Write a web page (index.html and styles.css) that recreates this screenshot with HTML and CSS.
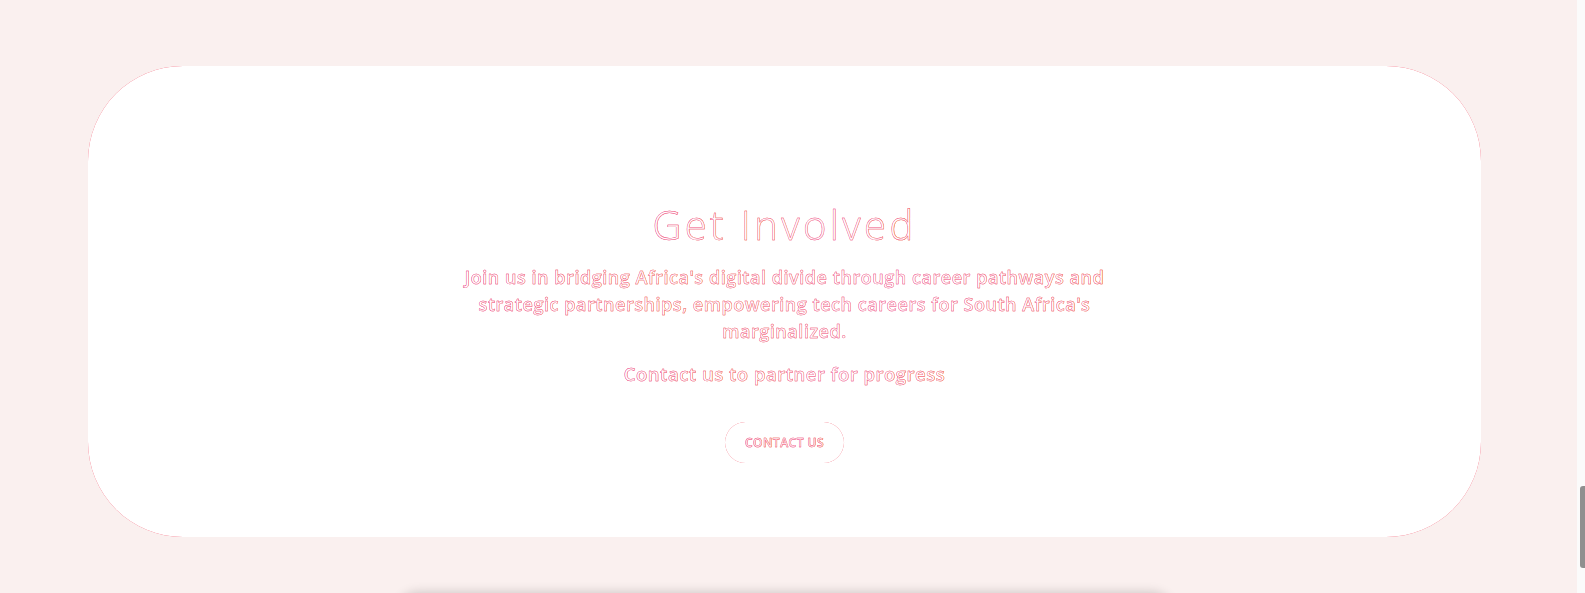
FILE: index.html
```html
<!DOCTYPE html>
<html lang="en">
<head>
<meta charset="utf-8">
<title>Get Involved</title>
<link rel="stylesheet" href="styles.css">
</head>
<body>
<div class="page">
  <div class="main">
    <div class="topline"></div>
    <div class="content">
      <section class="card-frame">
        <div class="card">
          <h2 class="title grad-text">Get Involved</h2>
          <p class="lead grad-text">Join us in bridging Africa's digital divide through career pathways and strategic partnerships, empowering tech careers for South Africa's marginalized.</p>
          <p class="cta-line grad-text">Contact us to partner for progress</p>
          <div class="btn-frame">
            <a class="btn" href="#"><span class="grad-text">CONTACT US</span></a>
          </div>
        </div>
      </section>
      <div class="next-card"></div>
    </div>
  </div>
  <div class="scrollbar"><div class="thumb"></div></div>
</div>
</body>
</html>
```
FILE: styles.css
```css
html, body {
  margin: 0;
  padding: 0;
  height: 100%;
  overflow: hidden;
}
body {
  font-family: "Open Sans", "DejaVu Sans", sans-serif;
  background: #faf0ef;
}
.page {
  display: flex;
  height: 593px;
}
.main {
  flex: 1;
  background: #faf0ef;
  display: flex;
  flex-direction: column;
}
.topline {
  height: 1px;
  background: #e6e1e1;
}
.content {
  padding: 66px 96px 0 88px;
  display: flex;
  flex-direction: column;
}
.card-frame {
  border-radius: 95px;
  background: #ee2f4a;
}
.card {
  height: 471px;
  box-sizing: border-box;
  border-radius: 95px;
  background: #ffffff;
  padding-top: 135px;
  display: flex;
  flex-direction: column;
  align-items: center;
  text-align: center;
}
.grad-text {
  background: linear-gradient(90deg, #ec4899, #fb923c, #f472b6, #f97316);
  -webkit-background-clip: text;
  background-clip: text;
  color: #ffffff;
  -webkit-text-stroke: 0.45px rgba(240, 80, 130, 0.9);
}
.title {
  margin: 0;
  font-size: 40px;
  line-height: 48px;
  font-weight: 300;
  letter-spacing: 3.4px;
}
.lead {
  margin: 15px 0 0;
  width: 680px;
  font-size: 18px;
  line-height: 27px;
  font-weight: 600;
  letter-spacing: 0.55px;
}
.cta-line {
  margin: 15px 0 0;
  font-size: 18.5px;
  line-height: 27px;
  font-weight: 600;
  letter-spacing: 0.5px;
}
.btn-frame {
  margin-top: 35px;
  border-radius: 21px;
  background: #ef3a50;
}
.btn {
  display: flex;
  align-items: center;
  justify-content: center;
  width: 119px;
  height: 41px;
  border-radius: 21px;
  background: #ffffff;
  text-decoration: none;
  font-size: 12px;
  font-weight: 600;
  letter-spacing: 0.5px;
}
.next-card {
  margin: 56px auto 0;
  width: 774px;
  height: 300px;
  border-radius: 20px;
  background: #faf0ef;
  box-shadow: 0 0 12px rgba(0, 0, 0, 0.2);
}
.scrollbar {
  width: 8px;
  background: #fbfbfb;
  display: flex;
  justify-content: flex-end;
}
.thumb {
  width: 5px;
  height: 82px;
  margin-top: 486px;
  border-radius: 3px 0 0 3px;
  background: #8f8f8f;
}
```
